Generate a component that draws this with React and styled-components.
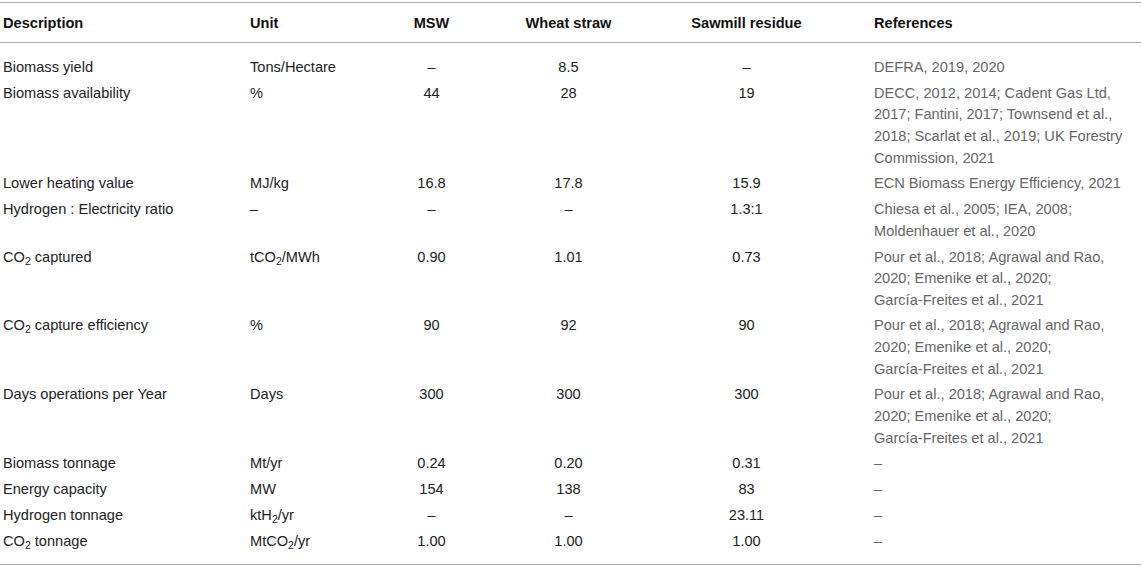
import React from 'react'
import styled, { createGlobalStyle } from 'styled-components'

const GlobalStyle = createGlobalStyle`
  body {
    margin: 0;
    background: #fff;
    font-family: "Liberation Sans", Arial, Helvetica, sans-serif;
  }
`

const Nb = styled.span`
  white-space: nowrap;
`

const pour = <>Pour et al., 2018; Agrawal and Rao, 2020; Emenike et al., 2020; <Nb>García-Freites</Nb> et al., 2021</>

const rows = [
  { d: 'Biomass yield', u: 'Tons/Hectare', a: '–', b: '8.5', c: '–', r: 'DEFRA, 2019, 2020' },
  { d: 'Biomass availability', u: '%', a: '44', b: '28', c: '19', r: 'DECC, 2012, 2014; Cadent Gas Ltd, 2017; Fantini, 2017; Townsend et al., 2018; Scarlat et al., 2019; UK Forestry Commission, 2021' },
  { d: 'Lower heating value', u: 'MJ/kg', a: '16.8', b: '17.8', c: '15.9', r: 'ECN Biomass Energy Efficiency, 2021' },
  { d: 'Hydrogen : Electricity ratio', u: '–', a: '–', b: '–', c: '1.3:1', r: 'Chiesa et al., 2005; IEA, 2008; Moldenhauer et al., 2020' },
  { d: <>CO<sub>2</sub> captured</>, u: <>tCO<sub>2</sub>/MWh</>, a: '0.90', b: '1.01', c: '0.73', r: pour },
  { d: <>CO<sub>2</sub> capture efficiency</>, u: '%', a: '90', b: '92', c: '90', r: pour },
  { d: 'Days operations per Year', u: 'Days', a: '300', b: '300', c: '300', r: pour },
  { d: 'Biomass tonnage', u: 'Mt/yr', a: '0.24', b: '0.20', c: '0.31', r: '–' },
  { d: 'Energy capacity', u: 'MW', a: '154', b: '138', c: '83', r: '–' },
  { d: 'Hydrogen tonnage', u: <>ktH<sub>2</sub>/yr</>, a: '–', b: '–', c: '23.11', r: '–' },
  { d: <>CO<sub>2</sub> tonnage</>, u: <>MtCO<sub>2</sub>/yr</>, a: '1.00', b: '1.00', c: '1.00', r: '–' },
]

export default function App() {
  return (
    <>
      <GlobalStyle />
      <Wrapper>
        <Table>
          <colgroup>
            <col style={{ width: 247 }} />
            <col style={{ width: 133 }} />
            <col style={{ width: 100 }} />
            <col style={{ width: 174 }} />
            <col style={{ width: 182 }} />
            <col />
          </colgroup>
          <thead>
            <tr>
              <Th>Description</Th>
              <Th>Unit</Th>
              <Th center>MSW</Th>
              <Th center>Wheat straw</Th>
              <Th center>Sawmill residue</Th>
              <Th refs>References</Th>
            </tr>
          </thead>
          <tbody>
            {rows.map((row, i) => (
              <Row key={i} first={i === 0} last={i === rows.length - 1}>
                <Td>{row.d}</Td>
                <Td>{row.u}</Td>
                <Td center>{row.a}</Td>
                <Td center>{row.b}</Td>
                <Td center>{row.c}</Td>
                <Td refs>{row.r}</Td>
              </Row>
            ))}
          </tbody>
        </Table>
      </Wrapper>
    </>
  )
}

const Wrapper = styled.div`
  width: 1141px;
  padding-top: 2px;
`

const Table = styled.table`
  width: 1141px;
  table-layout: fixed;
  border-collapse: collapse;
  border-top: 1.5px solid #aaa;
  border-bottom: 1.5px solid #aaa;
  font-size: 14.6px;
  color: #222;
`

const Th = styled.th`
  height: 39px;
  padding: 0 0 0 ${(p) => (p.refs ? '38px' : '3px')};
  text-align: ${(p) => (p.center ? 'center' : 'left')};
  font-weight: bold;
  vertical-align: middle;
  border-bottom: 1.5px solid #aaa;
  color: #111;
`

const Row = styled.tr`
  td {
    padding-top: ${(p) => (p.first ? '14px' : '2.1px')};
    padding-bottom: ${(p) => (p.last ? '12px' : '2.1px')};
  }
`

const Td = styled.td`
  padding-left: ${(p) => (p.refs ? '38px' : '3px')};
  padding-right: ${(p) => (p.refs ? '3px' : '0')};
  text-align: ${(p) => (p.center ? 'center' : 'left')};
  vertical-align: top;
  line-height: 21.6px;
  color: ${(p) => (p.refs ? '#666' : '#222')};

  sub {
    font-size: 10.5px;
    line-height: 0;
    vertical-align: -3px;
  }
`
